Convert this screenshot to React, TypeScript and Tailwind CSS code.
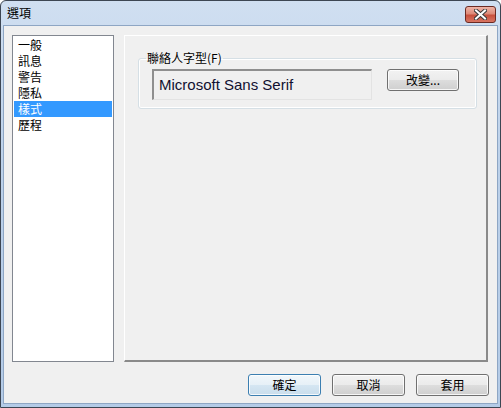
import React from 'react';

const cjk = '"Noto Sans CJK TC", "Liberation Sans", sans-serif';

const items = ['一般', '訊息', '警告', '隱私', '樣式', '歷程'];

const WinButton: React.FC<{ label: string; primary?: boolean; className?: string }> = ({ label, primary, className }) => (
  <button
    className={
      'h-[22px] rounded-[3px] border text-[12px] leading-none text-black flex items-center justify-center shadow-[inset_0_0_0_1px_rgba(255,255,255,0.8)] ' +
      (primary
        ? 'border-[#3c7fb1] bg-[linear-gradient(to_bottom,#f1f7fb_0%,#e6f0f7_50%,#d5e6f2_51%,#c9ddec_100%)] '
        : 'border-[#707070] bg-[linear-gradient(to_bottom,#f2f2f2_0%,#ebebeb_50%,#dddddd_51%,#cfcfcf_100%)] ') +
      (className || '')
    }
    style={{ fontFamily: cjk }}
  >
    {label}
  </button>
);

export default function App() {
  return (
    <div className="w-[501px] h-[408px] flex flex-col rounded-t-[6px] border border-[#3d4653] bg-[linear-gradient(to_bottom,#d0dff1_0%,#bcd1ea_40%,#b4cbe7_100%)]">
      {/* Title bar */}
      <div className="h-[24px] flex items-center justify-between pl-[6px] pr-[4px]">
        <span className="text-[12px] text-black" style={{ fontFamily: cjk }}>選項</span>
        <div className="w-[31px] h-[17px] mt-[2px] rounded-[3px] border border-[#6b2a22] bg-[linear-gradient(to_bottom,#eeb4a6_0%,#de8a78_45%,#c8503c_55%,#d87562_100%)] flex items-center justify-center">
          <svg width="13" height="11" viewBox="0 0 13 11">
            <path d="M2 1.5 L11 9.5 M11 1.5 L2 9.5" stroke="#3a3a3a" strokeWidth="4" strokeLinecap="square" />
            <path d="M2 1.5 L11 9.5 M11 1.5 L2 9.5" stroke="#ffffff" strokeWidth="2" strokeLinecap="square" />
          </svg>
        </div>
      </div>

      {/* Client area */}
      <div className="flex-1 mx-[2px] mb-[3px] border border-[#8ea6c4] bg-[#f0f0f0] pl-[8px] pr-[8px] pt-[9px] flex flex-col">
        <div className="h-[327px] flex gap-[10px]">
          {/* Category list */}
          <div className="w-[102px] border border-[#828790] bg-white p-[1px]">
            {items.map((item) => (
              <div
                key={item}
                className={
                  'h-[16px] pl-[4px] text-[12px] leading-[16px] ' +
                  (item === '樣式' ? 'bg-[#3399ff] text-white' : 'text-black')
                }
                style={{ fontFamily: cjk }}
              >
                {item}
              </div>
            ))}
          </div>

          {/* Settings panel */}
          <div className="w-[364px] border-t border-l border-white border-r-2 border-b-2 border-r-[#8a8a8a] border-b-[#8a8a8a] pl-[13px] pr-[9px] pt-[15px]">
            <fieldset className="rounded-[3px] border border-[#d5dfe5] shadow-[inset_0_0_0_1px_#ffffff] px-[7px] pb-[8px]">
              <legend className="px-[1px] text-[12px] leading-[14px] text-black" style={{ fontFamily: cjk }}>
                聯絡人字型(F)
              </legend>
              <div className="flex items-start gap-[15px] ml-[6px] mt-[4px]">
                <div className="w-[220px] h-[31px] border-t-2 border-l-2 border-t-[#8f8f8f] border-l-[#8f8f8f] border-r border-b border-r-[#e3e3e3] border-b-[#e3e3e3] bg-[#f0f0f0] flex items-center pl-[5px]">
                  <span className="text-[15px] text-[#101030]" style={{ fontFamily: '"Liberation Sans", Arial, sans-serif' }}>
                    Microsoft Sans Serif
                  </span>
                </div>
                <WinButton label="改變..." className="w-[72px] h-[21px]" />
              </div>
            </fieldset>
          </div>
        </div>

        {/* Dialog buttons */}
        <div className="mt-[12px] flex justify-end gap-[11px]">
          <WinButton label="確定" primary className="w-[73px]" />
          <WinButton label="取消" className="w-[73px]" />
          <WinButton label="套用" className="w-[73px]" />
        </div>
      </div>
    </div>
  );
}
